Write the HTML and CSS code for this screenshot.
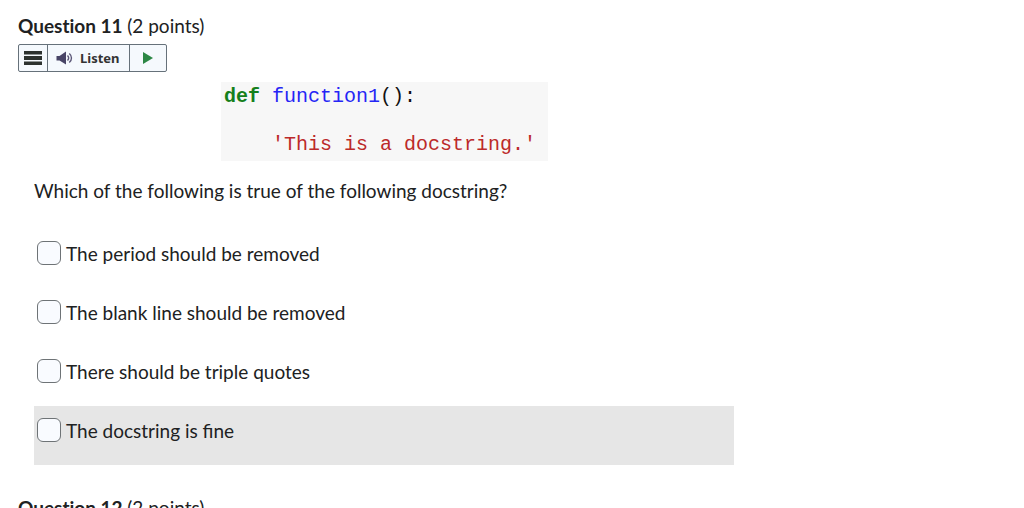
FILE: index.html
```html
<!DOCTYPE html>
<html lang="en">
<head>
  <meta charset="UTF-8" />
  <meta name="viewport" content="width=device-width, initial-scale=1.0" />
  <title>Quiz</title>
  <link rel="stylesheet" href="styles.css">
</head>
<body>
  <main class="quiz">
    <section class="question">
      <h2 class="question-title">Question 11 <span class="points">(2 points)</span></h2>

      <div class="reader-bar">
        <button class="reader-btn reader-menu" type="button" aria-label="Reader menu">
          <svg width="18" height="14" viewBox="0 0 18 14" fill="#2d322f">
            <rect width="18" height="3.5" />
            <rect y="5" width="18" height="4" />
            <rect y="10.5" width="18" height="3.5" />
          </svg>
        </button>
        <button class="reader-btn reader-listen" type="button">
          <svg width="17" height="14" viewBox="0 0 17 14" fill="none">
            <path d="M0.5 5h3L10 0.5v13L3.500 9.500H0.500z" fill="#484466" />
            <path d="M11.500 4.500c1.300 1.400 1.300 3.600 0 5M13.300 2.500c2.900 2.500 2.900 6.500 0 9" stroke="#5c5878" stroke-width="1.400" />
          </svg>
          Listen
        </button>
        <button class="reader-btn reader-play" type="button" aria-label="Play">
          <svg width="10" height="12" viewBox="0 0 10 12">
            <path d="M0 0l10 6-10 6z" fill="#2c8745" />
          </svg>
        </button>
      </div>

      <div class="question-body">
        <pre class="code"><code><span class="keyword">def</span> <span class="function">function1</span>():

    <span class="string">'This is a docstring.'</span></code></pre>

        <fieldset class="answers">
          <legend>Which of the following is true of the following docstring?</legend>
          <label class="answer"><input type="checkbox" name="answer" />The period should be removed</label>
          <label class="answer"><input type="checkbox" name="answer" />The blank line should be removed</label>
          <label class="answer"><input type="checkbox" name="answer" />There should be triple quotes</label>
          <label class="answer active"><input type="checkbox" name="answer" />The docstring is fine</label>
        </fieldset>
      </div>
    </section>

    <section class="question">
      <h2 class="question-title">Question 12 <span class="points">(2 points)</span></h2>
    </section>
  </main>
</body>
</html>
```
FILE: styles.css
```css
* {
  margin: 0;
  padding: 0;
  box-sizing: border-box;
}

body {
  font-family: Lato, sans-serif;
  font-size: 19px;
  line-height: 24px;
  color: #202122;
  background: white;
  height: 100vh;
  overflow: hidden;
}

.quiz {
  padding: 14px 18px;
}

.question {
  margin-bottom: 31px;
}

.question-title {
  font-size: 19px;
  font-weight: 700;
  line-height: 24px;
  font-variant-ligatures: none;
  margin-bottom: 6px;
}

.points {
  font-weight: 400;
}

/* Reader toolbar */
.reader-bar {
  display: inline-flex;
  height: 28px;
  border: 1px solid #66717a;
  border-radius: 2px;
  background: #f5f9fd;
  vertical-align: top;
}

.reader-btn {
  display: flex;
  align-items: center;
  justify-content: center;
  gap: 7px;
  border: none;
  background: none;
  color: #333;
  font-family: "Noto Sans", sans-serif;
  font-size: 13px;
  font-weight: 700;
  cursor: pointer;
}

.reader-btn + .reader-btn {
  border-left: 1px solid #66717a;
}

.reader-menu {
  width: 28px;
}

.reader-listen {
  padding: 0 9px 0 8px;
}

.reader-play {
  width: 37px;
}

.question-body {
  max-width: 716px;
  padding: 10px 0 0 16px;
}

.code {
  width: fit-content;
  margin: 0 auto 18px 187px;
  padding: 3px 12px 4px 3px;
  background: #f7f7f7;
  color: #111;
  font-family: "Liberation Mono", monospace;
  font-size: 20px;
  line-height: 24px;
}

.code code {
  font-family: inherit;
}

.keyword {
  color: #15801b;
  font-weight: 700;
}

.function {
  color: #2525f5;
}

.string {
  color: #bc2a2a;
}

.answers {
  border: none;
}

.answers legend {
  margin-bottom: 26px;
}

.answer {
  display: flex;
  align-items: flex-start;
  gap: 5px;
  padding: 12px 3px 21px;
  line-height: 26px;
  cursor: pointer;
}

.answer.active {
  background: #e6e6e6;
}

.answer input {
  appearance: none;
  width: 24px;
  height: 24px;
  border: 1px solid #6e7376;
  border-radius: 6px;
  background: #f9fbff;
}
```
